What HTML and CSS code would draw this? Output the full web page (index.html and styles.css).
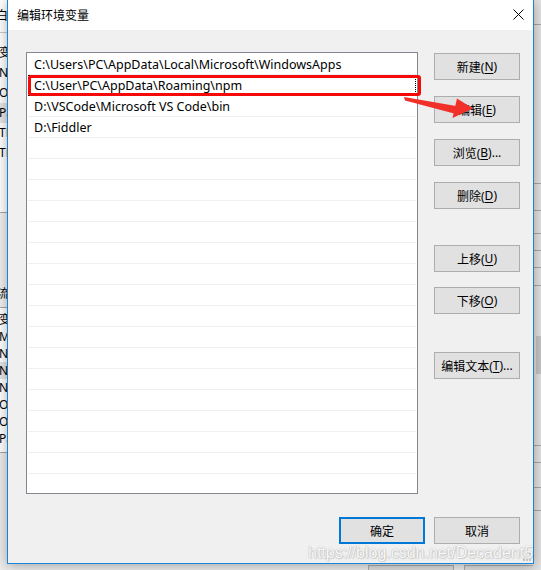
FILE: index.html
```html
<!DOCTYPE html>
<html lang="zh-CN">
<head>
<meta charset="utf-8">
<title>编辑环境变量</title>
<link rel="stylesheet" href="styles.css">
</head>
<body>
<div class="desktop">
  <div class="bg-left">
    <div class="l-top"><span class="l-glyph">白</span></div>
    <div class="l-list">
      <div class="l-item">变</div>
      <div class="l-item">N</div>
      <div class="l-item">O</div>
      <div class="l-item l-sel">Pa</div>
      <div class="l-item">TE</div>
      <div class="l-item">TN</div>
    </div>
    <div class="l-band"></div>
    <div class="l-head">流</div>
    <div class="l-list2">
      <div class="l-item2">变</div>
      <div class="l-item2">M</div>
      <div class="l-item2">N</div>
      <div class="l-item2 l-sel">N</div>
      <div class="l-item2">N</div>
      <div class="l-item2">O</div>
      <div class="l-item2">O</div>
      <div class="l-item2">Pa</div>
    </div>
    <div class="l-rest"></div>
  </div>
  <div class="bg-mid">
    <div class="bg-fill"></div>
    <div class="bg-bottom">
      <div class="bg-btn bg-btn1"></div>
      <div class="bg-btn bg-btn2"></div>
    </div>
  </div>
  <div class="bg-right">
    <div class="r-seg r1"></div>
    <div class="r-seg r2"></div>
    <div class="r-seg r3"></div>
    <div class="r-seg r4"></div>
    <div class="r-seg r5"></div>
    <div class="r-seg r6"></div>
    <div class="r-seg r7"></div>
    <div class="r-seg r8"><div class="r-thumb"></div></div>
    <div class="r-seg r9"></div>
    <div class="r-seg r10"></div>
    <div class="r-seg r11"></div>
    <div class="r-seg r12"></div>
  </div>
</div>

<div class="dialog">
  <div class="titlebar">
    <span class="title">编辑环境变量</span>
    <svg class="close" width="11" height="11" viewBox="0 0 11 11">
      <path d="M0.5 0.5 L10.5 10.5 M10.5 0.5 L0.5 10.5" stroke="#000" stroke-width="1" fill="none"/>
    </svg>
  </div>
  <div class="content">
    <div class="main">
      <div class="list">
        <div class="row">C:\Users\PC\AppData\Local\Microsoft\WindowsApps</div>
        <div class="row focus">C:\User\PC\AppData\Roaming\npm</div>
        <div class="row">D:\VSCode\Microsoft VS Code\bin</div>
        <div class="row">D:\Fiddler</div>
        <div class="row"></div>
        <div class="row"></div>
        <div class="row"></div>
        <div class="row"></div>
        <div class="row"></div>
        <div class="row"></div>
        <div class="row"></div>
        <div class="row"></div>
        <div class="row"></div>
        <div class="row"></div>
        <div class="row"></div>
        <div class="row"></div>
        <div class="row"></div>
        <div class="row"></div>
        <div class="row"></div>
        <div class="row"></div>
        <div class="row last"></div>
      </div>
      <div class="side">
        <div class="btn">新建(<u>N</u>)</div>
        <div class="btn">编辑(<u>E</u>)</div>
        <div class="btn">浏览(<u>B</u>)...</div>
        <div class="btn">删除(<u>D</u>)</div>
        <div class="btn up">上移(<u>U</u>)</div>
        <div class="btn down">下移(<u>O</u>)</div>
        <div class="btn edittext">编辑文本(<u>T</u>)...</div>
      </div>
    </div>
    <div class="footer">
      <div class="btn default">确定</div>
      <div class="btn">取消</div>
    </div>
  </div>
  <svg class="grip" width="10" height="10" viewBox="0 0 10 10">
    <g fill="#c4c4c4">
      <rect x="7" y="1" width="2" height="2"/>
      <rect x="4" y="4" width="2" height="2"/>
      <rect x="7" y="4" width="2" height="2"/>
      <rect x="1" y="7" width="2" height="2"/>
      <rect x="4" y="7" width="2" height="2"/>
      <rect x="7" y="7" width="2" height="2"/>
    </g>
  </svg>
</div>

<div class="highlight"></div>
<svg class="arrow" width="541" height="570" viewBox="0 0 541 570">
  <polygon points="404,97 405,100.5 454,113.5 456,106" fill="#f2302a"/>
  <polygon points="457,98.5 452.5,118 473,108.5" fill="#f2302a"/>
</svg>
<div class="watermark">https://blog.csdn.net/Decadent5</div>
</body>
</html>
```

FILE: styles.css
```css
* { box-sizing: border-box; }

html, body {
  margin: 0;
  padding: 0;
}

body {
  width: 541px;
  height: 570px;
  overflow: hidden;
  position: relative;
  background: #ffffff;
  font-family: "Noto Sans", "Noto Sans CJK SC", sans-serif;
  font-size: 12px;
  color: #000;
}

/* ---------- background window ---------- */
.desktop {
  display: flex;
  height: 570px;
}

.bg-left {
  width: 8px;
  flex: none;
  display: flex;
  flex-direction: column;
  overflow: hidden;
  background: #fff;
  font-family: "Noto Sans", "Noto Sans CJK SC", sans-serif;
  font-size: 12px;
  white-space: nowrap;
}

.l-top {
  height: 33px;
  line-height: 32px;
  border-bottom: 1px solid #c9c9c9;
}

.l-glyph { margin-left: -4px; }

.l-list {
  padding-top: 10px;
  height: 179px;
}

.l-item {
  height: 20px;
  line-height: 20px;
  margin-left: -1px;
}

.l-sel { background: #e5e5e5; }

.l-band {
  height: 68px;
  border-top: 1px solid #a6a6a6;
  background: #f0f0f0;
}

.l-head {
  height: 28px;
  line-height: 28px;
  background: #f0f0f0;
  border-bottom: 1px solid #a6a6a6;
  margin-left: -3px;
}

.l-list2 {
  height: 145px;
  padding-top: 3px;
  border-bottom: 1px solid #a6a6a6;
}

.l-item2 {
  height: 17px;
  line-height: 17px;
  margin-left: -1px;
}

.l-rest {
  flex: 1;
  background: #ececec;
}

.bg-mid {
  flex: 1;
  display: flex;
  flex-direction: column;
}

.bg-fill { flex: 1; background: #f0f0f0; }

.bg-bottom {
  height: 8px;
  display: flex;
  background: #f0f0f0;
  padding-left: 360px;
  padding-top: 3px;
  gap: 10px;
}

.bg-btn {
  height: 10px;
  border: 1px solid #adadad;
  background: #e1e1e1;
}

.bg-btn1 { width: 86px; }
.bg-btn2 { flex: 1; border-right: none; }

.bg-right {
  width: 8px;
  flex: none;
  display: flex;
  flex-direction: column;
  background: #e3e3e3;
}

.r-seg { border-bottom: 1px solid #a9a9a9; }
.r1 { height: 25px; }
.r2 { height: 159px; }
.r3 { height: 27px; }
.r4 { height: 23px; }
.r5 { height: 17px; }
.r6 { height: 17px; }
.r7 { height: 18px; }
.r8 { height: 160px; padding-top: 50px; padding-left: 3px; }
.r9 { height: 17px; }
.r10 { height: 25px; }
.r11 { height: 23px; }
.r12 { flex: 1; border-bottom: none; }

.r-thumb {
  height: 38px;
  background: #c6c6c6;
}

/* ---------- dialog ---------- */
.dialog {
  position: absolute;
  left: 7px;
  top: -1px;
  width: 527px;
  height: 565px;
  border: 1px solid #1883d7;
  background: #f0f0f0;
  box-shadow: 0 2px 12px rgba(0, 0, 0, 0.32);
  display: flex;
  flex-direction: column;
  font-family: "Noto Sans", "Noto Sans CJK SC", sans-serif;
}

.titlebar {
  height: 30px;
  flex: none;
  background: #fff;
  display: flex;
  align-items: center;
  justify-content: space-between;
  padding: 0 9px 0 9px;
}

.title {
  font-family: "Noto Sans CJK SC", sans-serif;
  font-size: 12px;
  color: #000;
  line-height: 30px;
}

.close { display: block; margin-top: -1px; }

.content {
  flex: 1;
  display: flex;
  flex-direction: column;
  padding: 22px 13px 0 18px;
}

.main {
  display: flex;
  gap: 16px;
  height: 442px;
}

.list {
  width: 392px;
  height: 442px;
  flex: none;
  border: 1px solid #828790;
  background: #fff;
  padding-top: 1px;
  overflow: hidden;
}

.row {
  height: 21px;
  margin: 0 1px;
  border-bottom: 1px solid #efefef;
  padding-left: 6px;
  padding-top: 1px;
  line-height: 20px;
  white-space: nowrap;
  font-size: 12.5px;
  color: #000;
}

.row.last { border-bottom: none; }

.row.focus {
  outline: 1px dotted #000;
  outline-offset: -1px;
}

.side {
  width: 86px;
  flex: none;
  display: flex;
  flex-direction: column;
  padding-top: 1px;
}

.btn {
  width: 86px;
  height: 27px;
  flex: none;
  border: 1px solid #adadad;
  background: #e1e1e1;
  display: flex;
  align-items: center;
  justify-content: center;
  font-size: 12px;
  color: #000;
  white-space: nowrap;
}

.btn u { text-underline-offset: 2px; }

.side .btn + .btn { margin-top: 16px; }
.side .btn.up { margin-top: 36px; }
.side .btn.down { margin-top: 15px; }
.side .btn.edittext { margin-top: 38px; }

.footer {
  display: flex;
  justify-content: flex-end;
  gap: 9px;
  margin-top: 23px;
}

.btn.default { border: 2px solid #0078d7; }

.grip {
  position: absolute;
  right: 1px;
  bottom: 1px;
}

/* ---------- annotations ---------- */
.highlight {
  position: absolute;
  left: 28px;
  top: 75px;
  width: 393px;
  height: 21px;
  border: 3px solid #f50a0a;
  border-radius: 3px;
}

.arrow {
  position: absolute;
  left: 0;
  top: 0;
  pointer-events: none;
}

.watermark {
  position: absolute;
  left: 308px;
  top: 545px;
  font-family: "Liberation Sans", Arial, sans-serif;
  font-size: 16px;
  line-height: 16px;
  color: rgba(255, 255, 255, 0.92);
  text-shadow: 0 0 1px #b5b5b5, 0 0 1px #b5b5b5, 1px 1px 1px rgba(0, 0, 0, 0.12);
  white-space: nowrap;
}
```
